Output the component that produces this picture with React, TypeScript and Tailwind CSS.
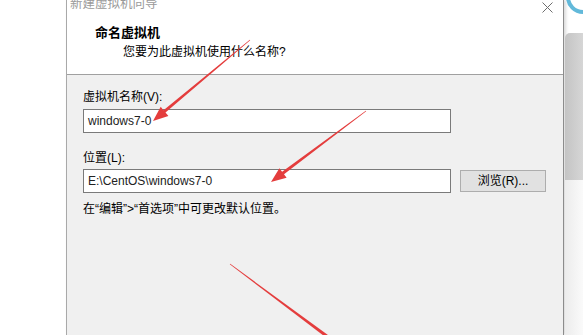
import React from 'react';

type Pt = [number, number];

// tapered red annotation stroke, optional head at the end
function arrowPoints(s: Pt, t: Pt, head: boolean, w0 = 0.3, w1 = 1.6) {
  const dx = t[0] - s[0];
  const dy = t[1] - s[1];
  const len = Math.hypot(dx, dy);
  const ux = dx / len;
  const uy = dy / len;
  const nx = -uy;
  const ny = ux;
  const hl = head ? 15 : 0;
  const b: Pt = [t[0] - ux * hl, t[1] - uy * hl];
  const p = (o: Pt, k: number): string => `${(o[0] + nx * k).toFixed(1)},${(o[1] + ny * k).toFixed(1)}`;
  if (!head) return [p(s, w0), p(t, w1), p(t, -w1), p(s, -w0)].join(' ');
  return [p(s, w0), p(b, w1), p(b, 6), `${t[0]},${t[1]}`, p(b, -6), p(b, -w1), p(s, -w0)].join(' ');
}

const arrows: { s: Pt; t: Pt; head: boolean }[] = [
  { s: [250, 40], t: [153, 121], head: true },
  { s: [366, 111], t: [271, 182], head: true },
  { s: [230, 264], t: [332, 340], head: false },
];

export default function App() {
  const font = "font-['Liberation_Sans','Noto_Sans_CJK_SC',sans-serif]";

  return (
    <div className={`relative w-[583px] h-[335px] overflow-hidden bg-white flex ${font} text-[12px] leading-[16px] text-black`}>
      <div className="w-[66px] shrink-0" />

      {/* wizard window */}
      <div className="w-[498px] shrink-0 flex flex-col border-l border-r border-l-[#a9a9a9] border-r-[#8c8c8c] shadow-[2px_0_3px_rgba(0,0,0,0.15)]">
        <div className="h-[75px] bg-white border-b border-[#a0a0a0] flex flex-col">
          <div className="flex justify-between items-start h-[13px] pl-[3px] pr-[10px]">
            <span className="-mt-[4px] text-[12.5px] text-[#9a9a9a]">新建虚拟机向导</span>
            <svg width="11" height="11" viewBox="0 0 11 11" className="mt-[2px]">
              <path d="M0.5 0.5 L10.5 10.5 M10.5 0.5 L0.5 10.5" stroke="#6e6e6e" strokeWidth="1" />
            </svg>
          </div>
          <div className="mt-[12px] pl-[28px] text-[13px] font-bold">命名虚拟机</div>
          <div className="mt-[3px] pl-[56px]">您要为此虚拟机使用什么名称?</div>
        </div>

        <div className="flex-1 bg-[#f0f0f0] pl-[16px] pt-[14px] flex flex-col">
          <div>虚拟机名称(V):</div>
          <div className="mt-[4px] w-[368px] h-[24px] bg-white border border-[#7a7a7a] flex items-center pl-[4px] text-[#222]">
            windows7-0
          </div>

          <div className="mt-[17px]">位置(L):</div>
          <div className="mt-[3px] flex items-center gap-[9px]">
            <div className="w-[368px] h-[24px] bg-white border border-[#7a7a7a] flex items-center pl-[4px] text-[#222]">
              E:\CentOS\windows7-0
            </div>
            <div className="w-[86px] h-[22px] bg-[#e1e1e1] border border-[#adadad] flex items-center justify-center">
              浏览(R)...
            </div>
          </div>

          <div className="mt-[8px]">在“编辑”&gt;“首选项”中可更改默认位置。</div>
        </div>
      </div>

      {/* neighbouring window edge */}
      <div className="flex-1 flex flex-col pt-[33px] pl-[1px]">
        <div className="h-[147px] rounded-tl-[5px] bg-gradient-to-r from-[#c4c4c4] to-[#d6d6d6]" />
        <div className="flex-1 bg-gradient-to-r from-[#ececec] to-[#fafafa]" />
      </div>

      <svg className="absolute inset-0 pointer-events-none" width="583" height="335">
        <circle cx="583" cy="-3" r="15" fill="none" stroke="#62b9da" strokeWidth="4" />
        {arrows.map((a, i) => (
          <polygon key={i} points={arrowPoints(a.s, a.t, a.head)} fill="#e43d3d" />
        ))}
      </svg>
    </div>
  );
}
